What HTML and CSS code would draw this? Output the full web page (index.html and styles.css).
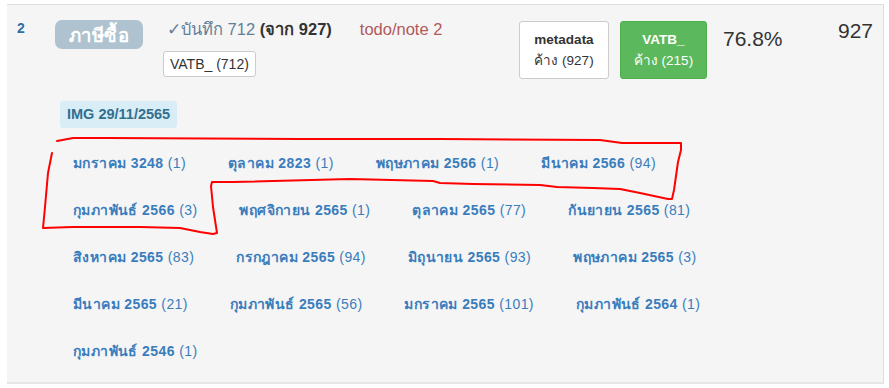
FILE: index.html
```html
<!DOCTYPE html>
<html lang="th">
<head>
<meta charset="utf-8">
<title>VAT row</title>
<link rel="stylesheet" href="styles.css">
</head>
<body>
<div class="page">
  <div class="row">
    <div class="head">
      <div class="c-num">2</div>
      <div class="c-label"><span class="badge">ภาษีซื้อ</span></div>
      <div class="c-main">
        <div class="line1">
          <span class="saved">✓บันทึก 712 <b class="of">(จาก 927)</b></span>
          <span class="todo">todo/note 2</span>
        </div>
        <span class="chip">VATB_ (712)</span>
      </div>
      <div class="c-btns">
        <div class="btn btn-white"><b>metadata</b><span>ค้าง (927)</span></div>
        <div class="btn btn-green"><b>VATB_</b><span>ค้าง (215)</span></div>
      </div>
      <div class="c-pct">76.8%</div>
      <div class="c-total">927</div>
    </div>
    <div class="detail">
      <span class="img-label">IMG 29/11/2565</span>
      <div class="months">
        <a class="m"><b>มกราคม 3248</b> (1)</a>
        <a class="m"><b>ตุลาคม 2823</b> (1)</a>
        <a class="m"><b>พฤษภาคม 2566</b> (1)</a>
        <a class="m"><b>มีนาคม 2566</b> (94)</a>
        <a class="m"><b>กุมภาพันธ์ 2566</b> (3)</a>
        <a class="m"><b>พฤศจิกายน 2565</b> (1)</a>
        <a class="m"><b>ตุลาคม 2565</b> (77)</a>
        <a class="m"><b>กันยายน 2565</b> (81)</a>
        <a class="m"><b>สิงหาคม 2565</b> (83)</a>
        <a class="m"><b>กรกฎาคม 2565</b> (94)</a>
        <a class="m"><b>มิถุนายน 2565</b> (93)</a>
        <a class="m"><b>พฤษภาคม 2565</b> (3)</a>
        <a class="m"><b>มีนาคม 2565</b> (21)</a>
        <a class="m"><b>กุมภาพันธ์ 2565</b> (56)</a>
        <a class="m"><b>มกราคม 2565</b> (101)</a>
        <a class="m"><b>กุมภาพันธ์ 2564</b> (1)</a>
        <a class="m"><b>กุมภาพันธ์ 2546</b> (1)</a>
      </div>
    </div>
  </div>
  <svg class="scribble" width="889" height="388" viewBox="0 0 889 388" aria-hidden="true">
    <path d="M57 141 L73 138 L107 138 L300 139 L440 139 L600 140 L622 143 L681 143 L681 150 L678 162 L674 190 L672 199 L668 199 L640 193 L620 189 L593 188 L557 187 L540 185 L473 184 L440 183 L433 181 L350 179 L233 182 L212 182 L211 186 L213 207 L217 233 L213 234 L200 232 L180 228 L140 227 L107 227 L73 227 L43 228 L45 207 L48 173 L52 153" fill="none" stroke="#ff0000" stroke-width="2" stroke-linejoin="round" stroke-linecap="round"/>
  </svg>
</div>
</body>
</html>
```
FILE: styles.css
```css
* { box-sizing: border-box; }
html, body { margin: 0; padding: 0; background: #fff; }
body {
  font-family: "Liberation Sans", Arial, "Noto Sans", sans-serif;
  color: #333;
}
.page {
  position: relative;
  width: 889px;
  height: 388px;
  padding: 4px 0 0 7px;
}
.row {
  width: 877px;
  height: 380px;
  background: #f5f5f5;
  border-top: 1px solid #dddddd;
  border-right: 1px solid #dddddd;
  border-bottom: 2px solid #e6e6e6;
}
.head {
  display: flex;
  align-items: flex-start;
  padding-top: 15px;
  height: 82px;
}
.c-num {
  width: 48px;
  padding-left: 10px;
  font-size: 14px;
  font-weight: bold;
  color: #2f6fa6;
  line-height: 16px;
  padding-top: 0;
}
.c-label { width: 108px; }
.badge {
  display: inline-block;
  width: 88px;
  height: 29px;
  padding-top: 3px;
  line-height: 26px;
  text-align: center;
  background: #aec3cf;
  color: #fff;
  font-weight: bold;
  font-size: 18.5px;
  letter-spacing: 0.5px;
  border-radius: 7px;
}
.c-main { width: 356px; }
.line1 {
  padding-left: 4px;
  font-size: 16.5px;
  line-height: 22px;
  display: flex;
  gap: 28px;
  margin-top: -2px;
}
.saved { color: #637f98; }
.of { color: #333; }
.todo { color: #b05a5a; }
.chip {
  display: inline-block;
  margin-top: 11px;
  height: 26px;
  line-height: 24px;
  padding: 0 6px;
  background: #fff;
  border: 1px solid #cccccc;
  border-radius: 3px;
  font-size: 14px;
  color: #333;
}
.c-btns {
  display: flex;
  gap: 11px;
  padding-top: 1px;
}
.btn {
  display: flex;
  flex-direction: column;
  align-items: center;
  justify-content: center;
  height: 58px;
  border-radius: 3px;
  font-size: 13.5px;
  line-height: 21px;
  padding-bottom: 1px;
}
.btn-white {
  width: 90px;
  background: #fff;
  border: 1px solid #cccccc;
  color: #333;
}
.btn-green {
  width: 87px;
  background: #5cb85c;
  border: 1px solid #4cae4c;
  color: #fff;
}
.c-pct {
  margin-left: 16px;
  width: 115px;
  font-size: 21px;
  line-height: 24px;
  padding-top: 7px;
}
.c-total {
  font-size: 21px;
  line-height: 24px;
  padding-top: 0;
  margin-top: -1px;
}
.detail {
  padding: 14px 0 0 53px;
}
.img-label {
  display: inline-block;
  height: 27px;
  line-height: 27px;
  padding: 0 7px;
  background: #d9edf7;
  color: #31708f;
  font-weight: bold;
  font-size: 14.5px;
  border-radius: 3px;
}
.months {
  display: flex;
  flex-wrap: wrap;
  column-gap: 42px;
  row-gap: 27px;
  width: 700px;
  margin-top: 25px;
  padding-left: 13px;
}
.m {
  color: #3a7dbd;
  font-size: 14px;
  letter-spacing: 0.4px;
  line-height: 20px;
  white-space: nowrap;
}
.m b { font-weight: bold; }
.scribble {
  position: absolute;
  left: 0;
  top: 0;
  pointer-events: none;
}
```
